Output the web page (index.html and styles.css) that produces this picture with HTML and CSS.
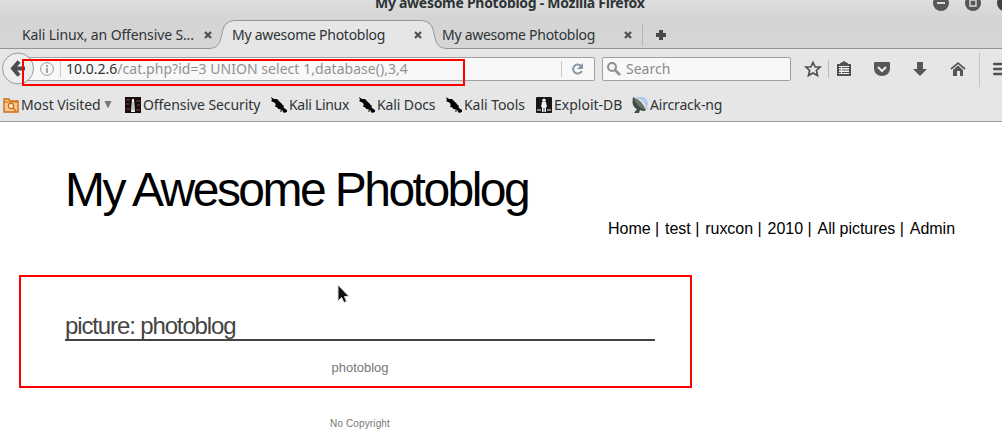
FILE: index.html
```html
<!DOCTYPE html>
<html lang="en">
<head>
<meta charset="utf-8">
<title>My awesome Photoblog</title>
<link rel="stylesheet" href="styles.css">
</head>
<body>
<svg width="0" height="0" class="defs">
  <symbol id="x" viewBox="0 0 8 8"><path d="M1 1L7 7M7 1L1 7" stroke="#505355" stroke-width="2.3"/></symbol>
  <symbol id="dragon" viewBox="0 0 16 16"><path d="M0 0L3 2L6 2L9 5L11 7L13 11L16 13V15L13 16L11 13L8 12L5 9L4 6L0 4L1 3Z" fill="#050505"/><path d="M5 8L8 12M6 10L4 9M11 9L13 9M10 13V15" stroke="#050505"/></symbol>
</svg>
<header class="chrome">
  <div class="titlebar">
    <span class="window-title">My awesome Photoblog - Mozilla Firefox</span>
    <svg class="window-buttons" width="70" height="12" viewBox="932 0 70 12"><circle cx="941" cy="3" r="8" fill="#555759"/><path d="M937 3H945" stroke="#ddd" stroke-width="2"/><circle cx="973" cy="3" r="8" fill="#555759"/><path d="M970 0H976V6H970Z" stroke="#ddd" stroke-width="1.4" fill="#555759"/><circle cx="1005" cy="3" r="8" fill="#3f4244"/></svg>
  </div>
  <div class="tabs">
    <svg class="tab-shape" width="1002" height="30" viewBox="0 0 1002 30"><path d="M205 30C231 30 212 1.5 237 1.5H418C444 1.5 424 30 450 30Z" fill="#e6e6e6"/><path d="M0 29.5H209C229 29 214 1.5 236 1.5H420C442 1.5 427 29 447 29.5H1002" fill="none" stroke="#939699"/><path d="M642.5 5V27" stroke="#b5b5b5"/></svg>
    <div class="tab first"><span class="t1">Kali Linux, an Offensive S...</span><svg width="8" height="8"><use href="#x"/></svg></div>
    <div class="tab"><span class="t2">My awesome Photoblog</span><svg width="8" height="8"><use href="#x"/></svg></div>
    <div class="tab"><span class="t2">My awesome Photoblog</span><svg width="8" height="8"><use href="#x"/></svg></div>
    <svg class="plus" width="12" height="12" viewBox="0 0 12 12"><path d="M4 1H8V4H11V8H8V11H4V8H1V4H4Z" fill="#46494b"/></svg>
  </div>
  <div class="navbar">
    <svg class="back" width="34" height="34" viewBox="0 0 34 34"><circle cx="16" cy="16.5" r="15.5" fill="#eee" stroke="#999"/><path d="M17 9.5L11 16.5L17 23.5M11 16.5H23" fill="none" stroke="#4c4f51" stroke-width="4"/></svg>
    <div class="urlbar">
      <svg class="info" width="14" height="14" viewBox="0 0 14 14"><circle cx="7" cy="7" r="6.4" fill="none" stroke="#999"/><path d="M7 6V11M7 3V5" stroke="#888" stroke-width="1.5"/></svg>
      <span class="host">10.0.2.6</span><span class="path">/cat.php?id=3 UNION select 1,database(),3,4</span>
      <svg class="reload" width="33" height="22" viewBox="0 0 33 22"><path d="M.5 3V19" stroke="#c8c8c8"/><path d="M20 8A4.5 4.5 0 1 0 20.8 13" fill="none" stroke="#8796a5" stroke-width="2"/><path d="M22 5V11H16Z" fill="#8796a5"/></svg>
    </div>
    <div class="searchbox"><svg width="14" height="14" viewBox="0 0 14 14"><circle cx="5" cy="5" r="4" fill="none" stroke="#8f8f8f" stroke-width="2"/><path d="M8 8L13 13" stroke="#8f8f8f" stroke-width="2.5"/></svg><span>Search</span></div>
    <svg class="tools" width="202" height="36" viewBox="800 51 202 36"><g fill="none" stroke="#4e5153"><path d="M813 62.5L815.2 67H820L816.4 70.5L817.5 75.5L813 73L808.5 75.5L809.6 70.5L806 67H810.8Z" stroke-width="1.7"/><path d="M828.5 60V78" stroke="#bbb"/><path d="M838 65H850V75H838Z" fill="#f4f4f4" stroke-width="2"/><path d="M840 64H848L844 61.5Z" fill="#4e5153"/><path d="M839 67.5H841M842 67.5H849M839 70H841M842 70H849M839 72.5H841M842 72.5H849"/><path d="M979.5 53V87" stroke="#c4c4c4"/><path d="M994.3 64H1002M994.3 69H1002M994.3 74H1002" stroke-width="2.6" stroke-linecap="round"/></g><path d="M875 62H889Q890 62 890 63V69Q889 76 882 76Q875 76 874 69V63Q874 62 875 62Z" fill="#55585a"/><path d="M878 67L882 71L886 67" fill="none" stroke="#eee" stroke-width="2"/><path d="M917 62H923V69H927L920 76L913 69H917Z" fill="#55585a"/><path d="M951 69L958 63L965 69" fill="none" stroke="#55585a" stroke-width="1.7"/><path d="M953 70L958 65.5L963 70V76H960V71H957V76H953Z" fill="#55585a"/></svg>
  </div>
  <div class="bookmarks">
    <div class="bm b1"><svg width="16" height="16" viewBox="0 0 16 16"><path d="M1 15V2H6L7 4H15V15Z" fill="#f6cb99" stroke="#cf6c13" stroke-width="1.4"/><path d="M1 5H15" stroke="#cf6c13"/><circle cx="8" cy="9" r="2.6" fill="#fff0dc" stroke="#cf6c13" stroke-width="1.3"/><path d="M10 11L13 14" stroke="#cf6c13" stroke-width="1.5"/></svg><span>Most Visited</span><svg class="caret" width="8" height="9" viewBox="0 0 8 9"><path d="M.5 1H7.5L4 8.5Z" fill="#777"/></svg></div>
    <div class="bm b2"><svg width="16" height="16"><rect width="16" height="16" fill="#160c0c"/><path d="M1 3H5M1 7H4M11 4H15M12 8H15M1 12H5M11 13H15" stroke="#4e2929" stroke-width="2"/><path d="M7 2H9L10 15H6Z" fill="#eee"/><path d="M8 5V13" stroke="#999"/></svg><span>Offensive Security</span></div>
    <div class="bm b3"><svg width="16" height="16"><use href="#dragon"/></svg><span>Kali Linux</span></div>
    <div class="bm b4"><svg width="16" height="16"><use href="#dragon"/></svg><span>Kali Docs</span></div>
    <div class="bm b5"><svg width="16" height="16"><use href="#dragon"/></svg><span>Kali Tools</span></div>
    <div class="bm b6"><svg width="16" height="16"><rect width="16" height="16" rx="1" fill="#161616"/><circle cx="8" cy="3.3" r="1.8" fill="#eee"/><path d="M6 5H10L11 10H10V15H8.4V11H7.6V15H6V10H5Z" fill="#eee"/><path d="M1 12H5V14H1ZM11 12H15V14H11Z" fill="#888"/></svg><span>Exploit-DB</span></div>
    <div class="bm b7"><svg width="16" height="16" viewBox="0 0 16 16"><path d="M5 .5Q14 2 15 12M8 0Q15 1 15.5 8" fill="none" stroke="#a9c6ef" stroke-width="1.6"/><path d="M1 0Q-1 10 5 12L2 16H7L8 13Q12 15 14 13Z" fill="#414b45"/><path d="M1 0Q10 3 14 13Q5 11 1 0Z" fill="#69736b"/></svg><span>Aircrack-ng</span></div>
  </div>
</header>
<main class="page">
  <h1>My Awesome Photoblog</h1>
  <nav><a>Home |</a><a>test |</a><a>ruxcon |</a><a>2010 |</a><a>All pictures |</a><a>Admin</a></nav>
  <section>
    <h2>picture: photoblog</h2>
    <p class="caption">photoblog</p>
  </section>
  <footer>No Copyright</footer>
</main>
<div class="mark mark-url"></div>
<div class="mark mark-result"></div>
<svg class="cursor" width="14" height="20" viewBox="0 0 14 20"><path d="M1 1V17L4.5 13.5L7 18.5L9.5 17.5L7.5 12.5H12Z" fill="#111" stroke="#ddd"/></svg>
</body>
</html>
```
FILE: styles.css
```css
* { box-sizing: border-box; }
body { margin: 0; width: 1002px; height: 445px; overflow: hidden; background: #fff; position: relative; font-family: "Liberation Sans", Arial, sans-serif; }
svg { display: block; flex: none; }
.defs { position: absolute; }
.chrome { height: 122px; background: #e6e6e6; border-bottom: 1px solid #999; font: 14px/20px "Noto Sans", sans-serif; color: #2e3436; white-space: nowrap; background-image: linear-gradient(#dedede, #d4d4d4 20px, #d6d6d6 48px, #e6e6e6 49px); }
.titlebar { height: 19px; display: flex; }
.window-title { margin-left: 375px; width: 557px; margin-top: -7px; font-weight: bold; letter-spacing: -.28px; }
.tabs { position: relative; height: 30px; display: flex; align-items: center; padding-top: 2px; }
.tab-shape { position: absolute; left: 0; top: 0; }
.tab { position: relative; width: 210px; display: flex; align-items: center; justify-content: space-between; padding-left: 10px; padding-right: 10px; }
.tab.first { width: 222px; padding-left: 22px; }
.t1 { letter-spacing: -.13px; }
.t2 { letter-spacing: -.27px; }
.plus { position: relative; margin-left: 13px; }
.navbar { height: 39px; display: flex; align-items: center; padding-left: 2px; }
.back { position: relative; z-index: 1; }
.urlbar { margin-left: -12px; width: 571px; height: 24px; border: 1px solid #a0a0a0; border-radius: 2px; background: #f8f8f8; display: flex; align-items: center; padding-left: 15px; }
.host { margin-left: 6px; padding-left: 5px; border-left: 1px solid #ccc; line-height: 16px; }
.path { color: #929292; line-height: 16px; letter-spacing: .04px; }
.reload { margin-left: auto; }
.searchbox { margin-left: 7px; width: 189px; height: 24px; border: 1px solid #a0a0a0; border-radius: 2px; background: #f8f8f8; display: flex; align-items: center; padding-left: 4px; gap: 5px; color: #8b8b8b; }
.tools { margin-left: 9px; }
.bookmarks { height: 33px; display: flex; align-items: center; padding-left: 3px; }
.bm { display: flex; align-items: center; gap: 2px; }
.caret { margin-left: 1px; }
.b1 { width: 122px; letter-spacing: -.08px; }
.b2 { width: 146px; letter-spacing: -.07px; }
.b3 { width: 88px; letter-spacing: -.3px; }
.b4 { width: 87px; letter-spacing: -.12px; }
.b5 { width: 90px; letter-spacing: -.05px; }
.b6 { width: 96px; }
.b7 { letter-spacing: -.18px; }
.page { padding: 40px 0 0 65px; }
h1 { margin: 0; font-size: 48px; line-height: 56px; font-weight: normal; letter-spacing: -2.55px; color: #000; }
nav { display: flex; justify-content: flex-end; gap: 6px; padding-right: 47px; font-size: 16px; line-height: 20px; margin-top: 1px; letter-spacing: -.04px; }
section { width: 590px; margin-top: 73px; }
h2 { margin: 0; font-size: 24px; line-height: 27px; height: 29px; font-weight: normal; letter-spacing: -1.13px; color: #444; border-bottom: 2px solid #444; }
.caption { margin: 19px 0 0; font-size: 13px; line-height: 16px; color: #777; text-align: center; }
footer { width: 590px; margin-top: 42px; font-size: 10px; line-height: 12px; color: #777; text-align: center; letter-spacing: .12px; }
.mark { position: absolute; border: 2px solid #f00; z-index: 2; }
.mark-url { left: 22px; top: 59px; width: 443px; height: 27px; }
.mark-result { left: 19px; top: 275px; width: 673px; height: 113px; }
.cursor { position: absolute; left: 337px; top: 284px; }
```
